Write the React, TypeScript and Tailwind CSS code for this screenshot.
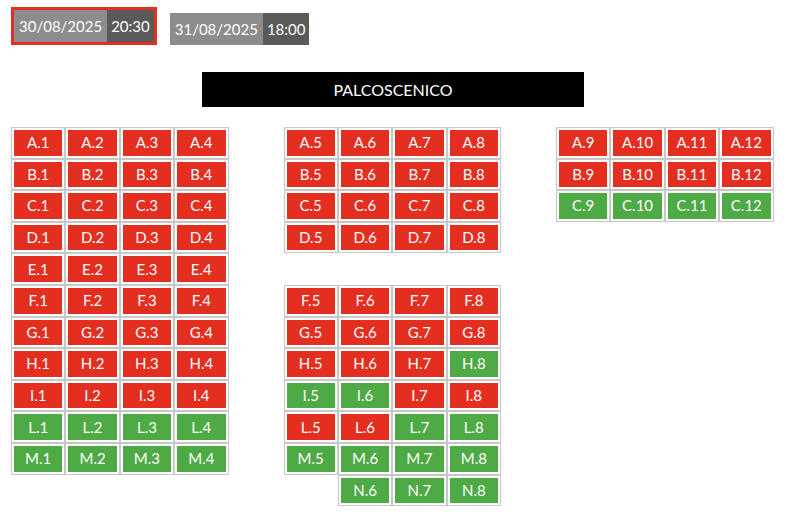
type Seat = { label: string; free: boolean } | null

const R = (label: string): Seat => ({ label, free: false })
const G = (label: string): Seat => ({ label, free: true })

const left: Seat[][] = [
  ['A', 'B', 'C', 'D', 'E', 'F', 'G', 'H', 'I'].map((r) => [1, 2, 3, 4].map((n) => R(`${r}.${n}`))),
  ['L', 'M'].map((r) => [1, 2, 3, 4].map((n) => G(`${r}.${n}`))),
].flat()

const middle: Seat[][] = [
  ...['A', 'B', 'C', 'D'].map((r) => [5, 6, 7, 8].map((n) => R(`${r}.${n}`))),
  [null, null, null, null],
  ...['F', 'G'].map((r) => [5, 6, 7, 8].map((n) => R(`${r}.${n}`))),
  [R('H.5'), R('H.6'), R('H.7'), G('H.8')],
  [G('I.5'), G('I.6'), R('I.7'), R('I.8')],
  [R('L.5'), R('L.6'), G('L.7'), G('L.8')],
  [G('M.5'), G('M.6'), G('M.7'), G('M.8')],
  [null, G('N.6'), G('N.7'), G('N.8')],
]

const right: Seat[][] = [
  [9, 10, 11, 12].map((n) => R(`A.${n}`)),
  [9, 10, 11, 12].map((n) => R(`B.${n}`)),
  [9, 10, 11, 12].map((n) => G(`C.${n}`)),
]

function SeatCell({ seat }: { seat: Seat }) {
  if (!seat) return <div className="h-[31.6px]" />
  return (
    <div className="h-[31.6px] border border-[#c8c8c8] p-[2px]">
      <div
        className={
          'h-full flex items-center justify-center text-white text-[15px] leading-none ' +
          (seat.free ? 'bg-[#4eaa44]' : 'bg-[#e32e20]')
        }
      >
        {seat.label}
      </div>
    </div>
  )
}

function Block({ rows }: { rows: Seat[][] }) {
  return (
    <div className="w-[217.5px] flex flex-col">
      {rows.map((row, i) => (
        <div key={i} className="grid grid-cols-4">
          {row.map((s, j) => (
            <SeatCell key={j} seat={s} />
          ))}
        </div>
      ))}
    </div>
  )
}

export default function App() {
  return (
    <div className="w-[792px] h-[514px] bg-white font-['Lato','Liberation_Sans',sans-serif] overflow-hidden">
      {/* date picker */}
      <div className="flex items-end gap-[13px] pl-[11px] pt-[7px]">
        <div className="flex border-[3px] border-[#e32e20] text-white text-[15px]">
          <span className="h-[32px] flex items-center px-[5px] bg-[#8c8c8c]">30/08/2025</span>
          <span className="h-[32px] flex items-center px-[4px] bg-[#5a5a5a]">20:30</span>
        </div>
        <div className="flex text-white text-[15px]">
          <span className="h-[32px] flex items-center px-[5px] bg-[#8c8c8c]">31/08/2025</span>
          <span className="h-[32px] flex items-center px-[4px] bg-[#5a5a5a]">18:00</span>
        </div>
      </div>

      <div className="ml-[202px] mt-[27px] w-[382px] h-[35px] bg-black text-white text-[16px] flex items-center justify-center">
        PALCOSCENICO
      </div>

      <div className="flex items-start gap-[55px] pl-[11px] mt-[20px]">
        <Block rows={left} />
        <Block rows={middle} />
        <Block rows={right} />
      </div>
    </div>
  )
}
